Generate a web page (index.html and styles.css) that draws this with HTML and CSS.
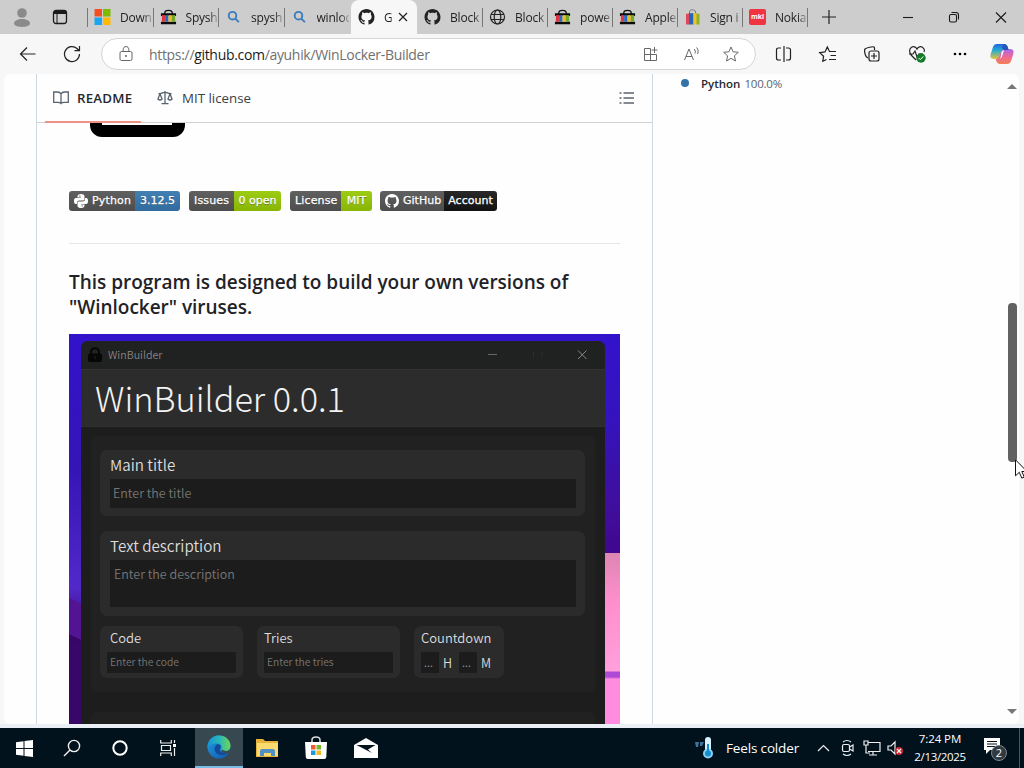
FILE: index.html
```html
<!DOCTYPE html>
<html lang="en">
<head>
<meta charset="utf-8">
<title>GitHub - ayuhik/WinLocker-Builder</title>
<link rel="stylesheet" href="styles.css">
</head>
<body>
<svg class="sprite" width="0" height="0">
  <symbol id="github" viewBox="0 0 16 16"><path d="M8 0C3.58 0 0 3.58 0 8c0 3.54 2.29 6.53 5.47 7.59.4.07.55-.17.55-.38 0-.19-.01-.82-.01-1.49-2.01.37-2.53-.49-2.69-.94-.09-.23-.48-.94-.82-1.13-.28-.15-.68-.52-.01-.53.63-.01 1.08.58 1.23.82.72 1.21 1.87.87 2.33.66.07-.52.28-.87.51-1.07-1.78-.2-3.64-.89-3.64-3.95 0-.87.31-1.59.82-2.15-.08-.2-.36-1.02.08-2.12 0 0 .67-.21 2.2.82.64-.18 1.32-.27 2-.27s1.36.09 2 .27c1.53-1.04 2.2-.82 2.2-.82.44 1.1.16 1.92.08 2.12.51.56.82 1.27.82 2.15 0 3.07-1.87 3.75-3.65 3.95.29.25.54.73.54 1.48 0 1.07-.01 1.93-.01 2.2 0 .21.15.46.55.38A8.01 8.01 0 0 0 16 8c0-4.42-3.58-8-8-8Z" fill="currentColor"/></symbol>
  <symbol id="bag" viewBox="0 0 18 16"><path d="M5 5V4c0-4 8-4 8 0v1" fill="none" stroke="#111" stroke-width="1.4"/><path d="M1 4h16v3H1zM1 13h16v2.6H1z" fill="#0a0a0a"/><path d="M2 6h3.500v7H2z" fill="#e03440"/><path d="M5.500 6H9v7H5.500z" fill="#2368c4"/><path d="M9 6h3.500v7H9z" fill="#e8ba2c"/><path d="M12.500 6H16v7h-3.500z" fill="#74a82c"/></symbol>
  <symbol id="find" viewBox="0 0 16 16"><g fill="none" stroke="#3c7cbc" stroke-width="1.9"><circle cx="7" cy="6.7" r="3.8"/><path d="m9.8 9.6 3.6 3.6"/></g></symbol>
</svg>

<header class="tabs">
  <svg class="profile" width="18" height="20" viewBox="0 0 18 20"><circle cx="9" cy="5" r="4.8" fill="#8a8a8a"/><path d="M1 15.500c0-6 16-6 16 0 0 4.500-16 4.500-16 0z" fill="#8a8a8a"/></svg>
  <svg class="tabmenu" width="16" height="16" viewBox="0 0 16 16"><rect x="1.500" y="1.500" width="13" height="13" rx="2.500" fill="none" stroke="#1b1b1b" stroke-width="1.300"/><path d="M2 2h12v3H2z" fill="#1b1b1b"/><path d="M5 5v9" stroke="#1b1b1b"/></svg>
  <div class="strip">
    <div class="tab"><svg class="fav" viewBox="0 0 16 16"><path fill="#f25022" d="M0 0h7.500v7.500H0z"/><path fill="#7fba00" d="M8.500 0H16v7.500H8.500z"/><path fill="#1ba4ef" d="M0 8.500h7.500V16H0z"/><path fill="#ffb900" d="M8.500 8.500H16V16H8.500z"/></svg><span>Down</span></div>
    <div class="tab"><svg class="fav"><use href="#bag"/></svg><span>Spysh</span></div>
    <div class="tab"><svg class="fav"><use href="#find"/></svg><span>spysh</span></div>
    <div class="tab plain"><svg class="fav"><use href="#find"/></svg><span>winloc</span></div>
    <div class="tab active"><svg class="fav"><use href="#github"/></svg><span>G</span><svg class="close" viewBox="0 0 10 10"><path d="m1 1 8 8M9 1 1 9" stroke="#222" stroke-width="1.200"/></svg></div>
    <div class="tab"><svg class="fav"><use href="#github"/></svg><span>Block</span></div>
    <div class="tab"><svg class="fav" viewBox="0 0 16 16"><g fill="none" stroke="#222" stroke-width="1.200"><circle cx="8" cy="8" r="7"/><ellipse cx="8" cy="8" rx="3.300" ry="7"/><path d="M1.500 5.500h13M1.500 10.500h13"/></g></svg><span>Block</span></div>
    <div class="tab"><svg class="fav"><use href="#bag"/></svg><span>powe</span></div>
    <div class="tab"><svg class="fav"><use href="#bag"/></svg><span>Apple</span></div>
    <div class="tab"><svg class="fav" viewBox="0 0 16 16"><path d="M5 5V3c0-3 6-3 6 0v2" fill="none" stroke="#777"/><path d="M1.500 5 5 4.200V15.500H1.500z" fill="#e0485a"/><path d="M4.500 4.200H9v11.300H4.500z" fill="#2466b8"/><path d="M9 4.200h3.500v11.300H9z" fill="#f0c030"/><path d="m12 4.200 3 .8v10.500h-3z" fill="#8ab42c"/></svg><span>Sign i</span></div>
    <div class="tab"><span class="fav mki">mki</span><span>Nokia</span></div>
  </div>
  <svg class="newtab" width="14" height="14" viewBox="0 0 14 14"><path d="M7 0v14M0 7h14" stroke="#222" stroke-width="1.200"/></svg>
  <svg class="winbtns" width="104" height="12" viewBox="0 0 104 12"><g fill="none" stroke="#1a1a1a" stroke-width="1.100"><path d="M0 6.500h10"/><rect x="46.500" y="3.500" width="7" height="7.500" rx="1.500"/><path d="M48.500 1.500h4.500q2.500 0 2.500 2.500v4.500"/><path d="m93 1.500 10 10M103 1.500l-10 10"/></g></svg>
</header>

<nav class="toolbar">
  <svg class="back" width="18" height="16" viewBox="0 0 18 16"><path d="M8 1.500 1.500 8 8 14.500M1.500 8H16.500" fill="none" stroke="#222" stroke-width="1.200"/></svg>
  <svg class="reload" width="18" height="18" viewBox="0 0 18 18"><path d="M16.500 9A7.500 7.500 0 1 1 14 3.500L16 5.500M16.500 1v4.700h-5" fill="none" stroke="#222" stroke-width="1.200"/></svg>
  <div class="address">
    <svg width="14" height="16" viewBox="0 0 14 16"><g fill="none" stroke="#666"><rect x="1" y="5.500" width="12" height="9" rx="1.500"/><path d="M4.200 5.500V3.400c0-3.800 5.600-3.800 5.600 0v2.100"/></g><circle cx="7" cy="10" r="1" fill="#666"/></svg>
    <span class="url">https://<b>github.com</b>/ayuhik/WinLocker-Builder</span>
    <svg class="actions" width="96" height="16" viewBox="0 0 96 16"><g fill="none" stroke="#686868"><path d="M7.500 2.500h-6v12h12v-6H1.500M7.500 2.500v12M11.500 1v6M8.500 4h6M41.500 14 46 3l4.500 11M43 10.500h6M51 3c1.500 1 1.500 3 1 4.500M53.500 1.500c2 2 2 4 1 6.500"/><path d="m88 1 2.100 4.800 5.200.5-3.900 3.500 1.100 5.200-4.500-2.700-4.500 2.700 1.100-5.200-3.900-3.500 5.200-.5z"/></g></svg>
  </div>
  <svg class="tools" width="192" height="20" viewBox="0 0 192 20"><g fill="none" stroke="#222" stroke-width="1.200"><path d="M6 4H3.500Q1.500 4 1.500 6v8q0 2 2 2H6M9 2v16M11 4h2.500q2 0 2 2v8q0 2-2 2H11"/><path d="M51.500 15.500 47.800 17.200 48.600 12.200 44.700 8.600 50 7.900 52.300 3 54.500 7.500H61M55.500 11.500H61M54 15.500h7"/><path d="M93 14c-3-.5-4-8-3-9s8-3 9-2 .5 2 .5 3"/><rect x="94" y="7" width="10" height="10" rx="2"/><path d="M99 9v6M96 12h6"/><path d="M141 16c-4-4-8-7-6-11s6-2.500 7 0c1-2.500 5-4 7 0 .6 1.200.4 2.300 0 3M134 10h4l2-3 2 6 2-3h4"/></g><circle cx="146" cy="14" r="4.700" fill="#167a2b"/><path d="m143.700 14 1.600 1.700 3-3.300" stroke="#fff" fill="none"/><circle cx="180" cy="10" r="1.300"/><circle cx="185" cy="10" r="1.300"/><circle cx="190" cy="10" r="1.300"/></svg>
  <svg class="copilot" width="24" height="22" viewBox="0 0 24 22"><defs><linearGradient id="ca" x2="0" y2="1"><stop stop-color="#2364df"/><stop offset=".4" stop-color="#22a9d2"/><stop offset="1" stop-color="#e2c63c"/></linearGradient><linearGradient id="cb" x2="0" y2="1"><stop stop-color="#a968e5"/><stop offset=".5" stop-color="#ed679c"/><stop offset="1" stop-color="#f48254"/></linearGradient></defs><path d="M7 1h7q3 0 4 4l.5 2h-4q-2 0-2.600 2l-1 4q-.9 3-3.500 3H4c-4 0-4-3-3-6l2-6q1-3 4-3" fill="url(#ca)"/><path d="M18.500 6H20c4 0 4 3 3 6l-2 6q-1 3-4 3h-7q-3 0-4-4l-.3-1q2.600.3 3.700-3l1.500-4q1-3 4-3z" fill="url(#cb)"/><path d="M14 1q3 0 4 4l.5 2h-4q-2 0-2.500-3z" fill="#2458b8"/><path d="m11.700 8.500 2.300-1.500-2 6.500q-.6 2-2.500 2.300 1-1 1.300-2z" fill="#fff"/></svg>
</nav>

<main class="page">
  <section class="readme">
    <div class="readme-head">
      <div class="rtab current"><svg width="16" height="16" viewBox="0 0 16 16"><path d="M8 4v9.500M8 4c-.7-1.500-2-2-3.500-2H.7v10.300h4c1.800 0 2.700.3 3.300 1.200.6-.9 1.500-1.200 3.300-1.200h4V2h-3.800C10 2 8.700 2.500 8 4z" fill="none" stroke="#59636e" stroke-width="1.300"/></svg><span>README</span></div>
      <div class="rtab"><svg width="16" height="16" viewBox="0 0 16 16"><path d="M8 1v13M4.500 13.700h7M1.500 3.700h2.300L6 2.600h4l2.200 1.100h2.300M3 4 .9 9q2 2 4.200 0L3 4zM13 4l-2.100 5q2.200 2 4.200 0L13 4z" fill="none" stroke="#59636e" stroke-width="1.300"/></svg><span>MIT license</span></div>
      <svg class="toc" width="16" height="14" viewBox="0 0 16 14"><path d="M4.500 2H15M4.500 7H15M4.500 12H15M.5 2h2M.5 7h2M.5 12h2" stroke="#59636e" stroke-width="1.300"/></svg>
    </div>
    <div class="lock"></div>
    <div class="badges">
      <div class="badge b1"><span class="key"><svg width="14" height="14" viewBox="0 0 24 24" fill="#fff"><path d="M8 1q4-2 8 0 2 1 2 3v5q0 2-2 2H9q-4 0-4 4v2H3Q0 17 0 12t3-5h9V6H6V4q0-2 2-3zm1 1.500v2h2v-2zM16 23q-4 2-8 0-2-1-2-3v-5q0-2 2-2h7q4 0 4-4V7h2q3 0 3 5t-3 5h-9v1h6v2q0 2-2 3zm-1-1.500v-2h-2v2z"/></svg>Python</span><span class="val blue">3.12.5</span></div>
      <div class="badge b2"><span class="key">Issues</span><span class="val green">0 open</span></div>
      <div class="badge b3"><span class="key">License</span><span class="val green">MIT</span></div>
      <div class="badge b4"><span class="key"><svg width="14" height="14"><use href="#github"/></svg>GitHub</span><span class="val black">Account</span></div>
    </div>
    <h3>This program is designed to build your own versions of<br><span class="second">"Winlocker" viruses.</span></h3>
    <div class="shot">
      <div class="win">
        <div class="win-title"><svg width="16" height="16" viewBox="0 0 16 16"><path d="M4 8V5c0-5 8-5 8 0v3" fill="none" stroke="#070707" stroke-width="2"/><rect x="1" y="6.500" width="14" height="8.500" rx="2" fill="#070707"/><path d="M8 9v3" stroke="#252525"/></svg><span>WinBuilder</span><svg class="ctl" width="100" height="12" viewBox="0 0 100 12"><path d="M0 5.500h9" stroke="#686868"/><path d="M45.500 3v6M54 3v6" stroke="#2c2c2c"/><path d="m90 1.500 8.500 8.500M98.500 1.500 90 10" stroke="#888"/></svg></div>
        <div class="win-head">WinBuilder 0.0.1</div>
        <div class="win-body">
          <div class="panel">
            <div class="card main"><label>Main title</label><div class="field">Enter the title</div></div>
            <div class="card text"><label>Text description</label><div class="field">Enter the description</div></div>
            <div class="trio">
              <div class="mini"><label>Code</label><div class="field">Enter the code</div></div>
              <div class="mini tries"><label>Tries</label><div class="field">Enter the tries</div></div>
              <div class="mini count"><label>Countdown</label><div class="hm"><i>...</i><span>H</span><i>...</i><span>M</span></div></div>
            </div>
          </div>
          <div class="panel next"></div>
        </div>
      </div>
    </div>
  </section>
  <aside class="side"><i class="dot"></i><b>Python</b><span>100.0%</span></aside>
  <div class="scroll"><i class="up"></i><div class="thumb"></div><i class="down"></i></div>
</main>

<footer class="taskbar">
  <div class="slot"><svg width="17" height="17" viewBox="0 0 17 17"><path d="M0 2.300 7.500 1.200V8H0zM8.500 1 17 0v8H8.500zM0 9h7.500v6.800L0 14.700zM8.500 9H17v8l-8.500-1z" fill="#fff"/></svg></div>
  <div class="slot"><svg width="18" height="18" viewBox="0 0 18 18"><g fill="none" stroke="#eee" stroke-width="1.400"><circle cx="11" cy="7" r="5.600"/><path d="m7 11-6 6"/></g></svg></div>
  <div class="slot"><svg width="16" height="16" viewBox="0 0 16 16"><circle cx="8" cy="8" r="6.700" fill="none" stroke="#fff" stroke-width="2"/></svg></div>
  <div class="slot"><svg width="17" height="16" viewBox="0 0 17 16"><path d="M.7 0v3h10.600V0M.7 16v-3h10.600v3M1.500 5.500h9v5h-9zM14.500 0v3M14.500 8v8" fill="none" stroke="#eee" stroke-width="1.200"/><path d="M13 4h3v3h-3z" fill="#fff"/></svg></div>
  <div class="slot open"><svg width="24" height="24" viewBox="0 0 24 24"><defs><linearGradient id="e1"><stop stop-color="#1693d4"/><stop offset=".5" stop-color="#28b6bd"/><stop offset="1" stop-color="#70d751"/></linearGradient><linearGradient id="e2" x2="1" y2="1"><stop stop-color="#1e9fe0"/><stop offset="1" stop-color="#1254ad"/></linearGradient></defs><circle cx="12" cy="12" r="11.500" fill="url(#e2)"/><path d="M.5 11C2 3 7 .5 12 .5c7 0 11.500 5 11.500 10 0 4-3 6-6.500 6-3 0-4-1-3-2.300 2-3.200-.5-5.700-4-5.700C5 8.500 1.500 10 .5 13z" fill="url(#e1)"/><path d="M9 10c-4 5 1 11 7 10 2 0 4-1.500 5.500-3-3 1.500-7 1-8.500-1-1.300-2 1-3 .5-5-.5-1.500-3-2.300-4.500-1z" fill="#154a96"/><path d="M15.500 14.500q1.500 2.500 8.500.5l-1.500 3.200q-6 1-8.500-2.200z" fill="#384b54"/></svg></div>
  <div class="slot"><svg width="22" height="20" viewBox="0 0 22 20"><path d="M0 1h7l2 2h13v16H0z" fill="#e8b33c"/><path d="M1 5h21v13H1z" fill="#fbdb6d"/><path d="M4 18v-5q0-2 2-2h11q2 0 2 2v5h-4v-3H8v3z" fill="#528fc4"/></svg></div>
  <div class="slot wide"><svg width="24" height="24" viewBox="0 0 24 24"><path d="M8 7V4q0-3 4-3t4 3v3" fill="none" stroke="#ddd" stroke-width="1.500"/><path d="M1 6h22l-.7 15q-.2 2-2 2H3.700q-1.700 0-1.900-2z" fill="#fff"/><path d="M7 9h4.500v4.500H7z" fill="#f05a32"/><path d="M12.500 9H17v4.500h-4.500z" fill="#76b82a"/><path d="M7 14.500h4.500V19H7z" fill="#1a9cd8"/><path d="M12.500 14.500H17V19h-4.500z" fill="#f4b720"/></svg></div>
  <div class="slot wide"><svg width="24" height="20" viewBox="0 0 24 20"><path d="M0 7 12 0l12 7v13H0z" fill="#fff"/><path d="M2.500 7h19L14 11.500 18 15z" fill="#03141f"/></svg></div>
  <div class="tray">
    <svg width="22" height="24" viewBox="0 0 22 24"><path d="M1 6h4l-1 5H2zM6 6h4l-2 4H6z" fill="#3d749e"/><rect x="11" y="1" width="6" height="18" rx="3" fill="#d8f3ff"/><circle cx="14" cy="17.500" r="5" fill="#88d1f5"/><circle cx="14" cy="17.500" r="3" fill="#168dce"/><path d="M14 8v9" stroke="#168dce" stroke-width="2"/></svg>
    <span class="feels">Feels colder</span>
    <svg class="sys" width="88" height="18" viewBox="0 0 88 18"><g fill="none" stroke="#eee" stroke-width="1.200"><path d="m1 12 5.500-5.500L12 12"/><rect x="25.500" y="5.500" width="7" height="7" rx="1.500"/><path d="m32.500 8 3.500-2v6l-3.500-2M26 3q4-3 8 0M26 15q4 3 8 0"/><path d="M51.500 3.500H63v9H51M56 12.500V16M52 16h8M47 2h4v4h-4zM49 6v8h4"/><path d="M71 7h3l4-4v12l-4-4h-3z"/></g><circle cx="82" cy="12" r="4" fill="#cb2531"/><path d="m80 10 4 4M84 10l-4 4" stroke="#fff" stroke-width="1.200"/></svg>
    <div class="clock"><span>7:24 PM</span><span>2/13/2025</span></div>
    <svg class="note" width="26" height="26" viewBox="0 0 26 26"><path d="M1 2h16v12H7l-4 4v-4H1z" fill="#fff"/><path d="M4 5.500h10M4 8h10M4 10.500h10" stroke="#07131c"/><circle cx="16" cy="17" r="7.500" fill="#303a40" stroke="#7e858a"/><text x="16" y="21" text-anchor="middle" class="count-no">2</text></svg>
  </div>
  <i class="peek"></i>
</footer>
<svg class="cursor" width="12" height="20" viewBox="0 0 12 20"><path d="M.5.800v16l3.800-3.500 2.500 5.800 2.500-1-2.500-5.600H12z" fill="#fff" stroke="#111"/></svg>
</body>
</html>
```
FILE: styles.css
```css
* { box-sizing: border-box; }
body { margin: 0; width: 1024px; height: 768px; overflow: hidden; display: flex; flex-direction: column; background: #f7f7f7; color: #1f2328; font-family: "Open Sans", "Noto Sans", sans-serif; position: relative; }
svg { display: block; flex: none; }
.sprite { position: absolute; }
i { font-style: normal; }

.tabs { height: 34px; background: #cdcdcd; display: flex; align-items: center; flex: none; }
.profile { margin-left: 13px; margin-top: 2px; }
.tabmenu { margin-left: 21px; }
.strip { margin-left: 19px; width: 720px; flex: none; height: 34px; display: flex; align-items: center; }
.tab { position: relative; flex: none; width: 65px; height: 34px; padding-left: 7px; display: flex; align-items: center; font-size: 12px; letter-spacing: -.2px; color: #222; }
.tab:nth-child(-n+3) { width: 65.500px; }
.tab:nth-child(4) { width: 67.500px; }
.tab:nth-child(5) { width: 66px; }
.tab::after { content: ""; position: absolute; right: -1px; top: 8px; height: 19px; width: 1px; background: #777; }
.tab:first-child::before { content: ""; position: absolute; left: 0; top: 8px; height: 19px; width: 1px; background: #777; }
.plain::after, .active::after { display: none; }
.fav { width: 17px; height: 16px; flex: none; }
.tab > span:last-child, .active > span { margin-left: 9px; width: 32px; white-space: nowrap; -webkit-mask-image: linear-gradient(90deg, #000 72%, #0003); mask-image: linear-gradient(90deg, #000 72%, #0003); }
.active { background: #f7f7f7; border-radius: 8px 8px 0 0; }
.active > span { width: 9px; }
.close { width: 10px; height: 10px; margin-left: 5px; }
.mki { background: #ef3340; color: #fff; border-radius: 2px; font: bold 7px/15px "Open Sans", sans-serif; text-align: center; }
.newtab { margin-left: 15px; }
.winbtns { margin-left: 67px; }

.toolbar { height: 40px; flex: none; display: flex; align-items: center; background: #f7f7f7; }
.back { margin-left: 19px; }
.reload { margin-left: 26px; }
.address { margin-left: 20px; width: 655px; height: 32px; border: 1px solid #d4d4d4; border-radius: 16px; background: #fff; display: flex; align-items: center; padding: 0 16px 0 17px; }
.url { margin-left: 16px; font-size: 14px; letter-spacing: -.32px; color: #707070; }
.url b { color: #1b1b1b; font-weight: 400; }
.actions { margin-left: auto; }
.tools { margin-left: 19px; }
.copilot { margin-left: 23px; }

.page { width: 1015px; height: 650px; margin-left: 4px; flex: none; background: #fefefe; border-radius: 6px; display: flex; overflow: hidden; }
.readme { width: 617px; margin-left: 32px; flex: none; border-left: 1px solid #d1d9e0; border-right: 1px solid #d1d9e0; }
.readme-head { height: 49px; border-bottom: 1px solid #d1d1d4; display: flex; padding-left: 8px; font-size: 13.300px; }
.rtab { height: 49px; padding: 0 8px 2px; display: flex; align-items: center; gap: 8px; color: #3b4046; }
.rtab + .rtab { margin-left: 8px; }
.rtab + .rtab span { margin-left: 1px; }
.current { width: 96px; border-bottom: 2px solid #ef9285; font-weight: 600; color: #25292e; letter-spacing: .2px; padding-bottom: 0; }
.toc { margin: 17px 17px 0 auto; }
.lock { width: 95px; height: 14px; margin-left: 53px; background: linear-gradient(#fff, #fff) 12px 0 / 70px 2px no-repeat #000; border-radius: 0 0 12px 12px; }
.badges { height: 107px; margin: 0 32px; border-bottom: 1px solid #e4e7ea; padding-top: 54px; display: flex; gap: 9px; font: 11px/20px "DejaVu Sans", sans-serif; color: #fff; text-shadow: 0 1px #3338; -webkit-text-stroke: .25px #fff; }
.badge { height: 20px; border-radius: 3px; overflow: hidden; display: flex; white-space: nowrap; }
.b1 { width: 111px; } .b2 { width: 92px; } .b3 { width: 82px; } .b4 { width: 117px; margin-left: -1px; }
.key { background: linear-gradient(#606060, #4d4d4d); padding-left: 5px; display: flex; align-items: center; letter-spacing: .15px; }
.key svg { margin: 0 4px 0 0; -webkit-text-stroke: 0; }
.val { flex: 1; text-align: center; letter-spacing: 0; }
.b1 .key { width: 66px; } .b2 .key { width: 45px; } .b3 .key { width: 51px; } .b4 .key { width: 64px; letter-spacing: 0; }
.blue { background: linear-gradient(#4280b4, #316b9f); }
.green { background: linear-gradient(#9dcc14, #88b505); }
.black { background: linear-gradient(#292929, #121212); }
h3 { margin: 26px 32px 14px; height: 50px; font-size: 19px; line-height: 25px; font-weight: 600; white-space: nowrap; letter-spacing: -.02px; }

.shot { width: 551px; height: 390px; margin-left: 32px; padding: 7px 0 0 12px; overflow: hidden; background: linear-gradient(transparent 0 219px, #dd86b2 219px, #ff8fce 270px, #ffa0dc 337px, #ae4ad5 338px 343px, #ff8cde 345px) 536px 0 / 15px 390px no-repeat, linear-gradient(205deg, transparent 10%, #521493 11% 80%, #380667 82%) 0 264px / 12px 46px no-repeat, linear-gradient(#380768, #380768) 0 310px / 12px 80px no-repeat, linear-gradient(transparent 90px, #400890 210px) 536px 0 / 15px 219px no-repeat, linear-gradient(#3312cc, #3615b6 35%, #5228c9 65%, #390768 78%); font-family: "Noto Sans CJK SC", sans-serif; font-weight: 350; }
.win { width: 524px; height: 383px; border-radius: 7px 7px 0 0; overflow: hidden; background: #1d1d1d; color: #ddd; }
.win-title { height: 29px; background: #202121; border-bottom: 1px solid #333; padding-left: 6px; display: flex; align-items: center; font-size: 10.700px; color: #858585; }
.win-title span { margin: -2px 0 0 5px; }
.ctl { margin-left: auto; margin-right: 17px; }
.win-head { height: 57px; background: #2c2c2c; border-bottom: 1px solid #303030; padding-left: 14px; font-size: 34.300px; line-height: 54px; font-weight: 300; color: #f3f3f3; }
.win-body { padding: 9px 10px 0; }
.panel { height: 256px; background: #212121; padding: 14px 9px 0; border-radius: 6px; }
.next { height: 40px; margin-top: 20px; }
.card, .mini { background: #2b2b2b; border-radius: 7px; }
.card { width: 485px; padding: 0 9px 0 10px; font-size: 15.200px; }
.card label, .mini label { display: block; }
.card label { height: 29px; line-height: 28px; }
.field { background: #1c1c1c; color: #777; white-space: nowrap; }
.card .field { font-size: 12.500px; padding-left: 3px; }
.main { height: 66px; } .main .field { height: 29px; line-height: 27px; }
.text { margin-top: 15px; height: 85px; } .text .field { height: 47px; line-height: 28px; padding-left: 4px; }
.trio { display: flex; gap: 14px; margin-top: 10px; }
.mini { width: 143px; height: 52px; padding: 0 7px; font-size: 13px; }
.mini label { height: 26px; line-height: 24px; padding-left: 3px; }
.tries label, .count label { padding-left: 0; }
.mini .field { height: 21px; line-height: 20px; padding-left: 3px; font-size: 10.300px; }
.count { width: 90px; white-space: nowrap; }
.hm { height: 21px; display: flex; align-items: center; font-size: 12.500px; line-height: 20px; }
.hm i { width: 18px; height: 21px; line-height: 20px; background: #1c1c1c; color: #999; padding-left: 3px; font-size: 11px; }
.hm span { width: 20px; padding-left: 4px; }

.side { width: 337px; display: flex; align-items: center; height: 18px; padding-left: 28px; font-size: 11.500px; color: #59636e; }
.side b { margin-left: 12px; color: #25292e; font-weight: 600; }
.side span { margin-left: 4px; letter-spacing: -.2px; }
.dot { width: 8px; height: 8px; border-radius: 50%; background: #3572a5; }
.scroll { width: 10px; margin-left: 17px; flex: none; display: flex; flex-direction: column; align-items: center; padding-top: 10px; }
.up, .down { border: 5px solid transparent; width: 0; height: 0; }
.up { border-top: 0; border-bottom-color: #777; }
.down { border-bottom: 0; border-top-color: #777; margin-top: 247px; }
.thumb { width: 9px; height: 159px; margin-top: 214px; border-radius: 4px; background: #626262; }

.taskbar { height: 40px; flex: none; margin-top: 4px; background: #02121d; display: flex; color: #fff; box-shadow: 0 -4px #eaf0f6; }
.slot { width: 48px; height: 40px; display: flex; align-items: center; justify-content: center; }
.slot:nth-child(4) { width: 51px; padding-right: 3px; }
.open { background: #374850; border-bottom: 2px solid #79bce8; }
.wide { width: 50px; }
.tray { margin-left: auto; display: flex; align-items: center; }
.feels { margin-left: 10px; font-size: 13.500px; letter-spacing: -.15px; width: 74px; white-space: nowrap; }
.sys { margin-left: 17px; }
.clock { width: 58px; margin-left: 6px; display: flex; flex-direction: column; align-items: center; font-size: 11.500px; line-height: 18px; letter-spacing: -.35px; white-space: nowrap; }
.clock span:first-child { letter-spacing: -.1px; }
.note { margin-left: 14px; margin-right: 10px; margin-top: 2px; }
.count-no { font: 11px "Open Sans", sans-serif; fill: #fff; }
.peek { width: 1px; height: 40px; background: #46545d; margin-right: 4px; }
.cursor { position: absolute; left: 1015px; top: 459px; }
```
